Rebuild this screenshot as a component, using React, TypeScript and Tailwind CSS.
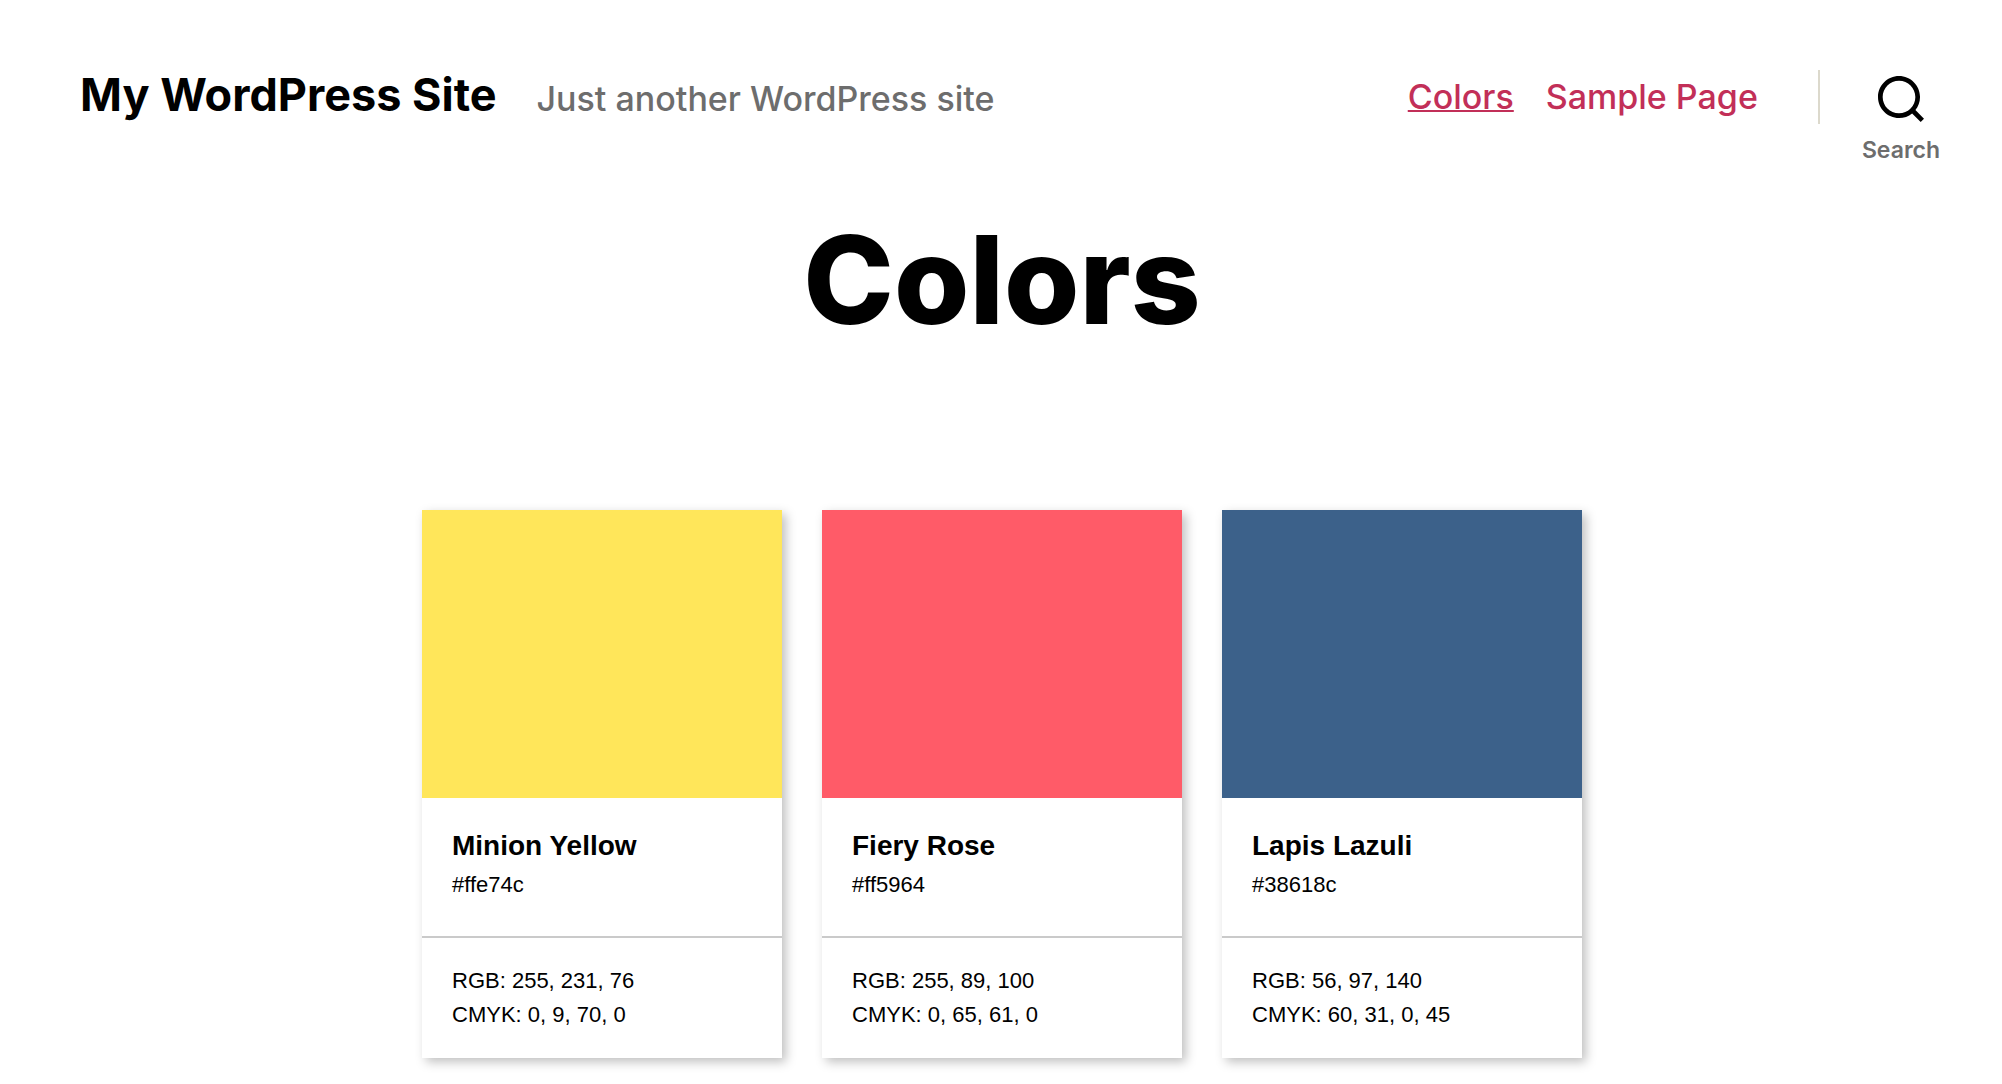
type Swatch = {
  name: string;
  hex: string;
  rgb: string;
  cmyk: string;
  fill: string;
};

const swatches: Swatch[] = [
  { name: "Minion Yellow", hex: "#ffe74c", rgb: "255, 231, 76", cmyk: "0, 9, 70, 0", fill: "bg-[#ffe65a]" },
  { name: "Fiery Rose", hex: "#ff5964", rgb: "255, 89, 100", cmyk: "0, 65, 61, 0", fill: "bg-[#ff5b68]" },
  { name: "Lapis Lazuli", hex: "#38618c", rgb: "56, 97, 140", cmyk: "60, 31, 0, 45", fill: "bg-[#3c618a]" },
];

function SearchIcon() {
  return (
    <svg viewBox="0 0 23 23" className="size-[46px]" fill="currentColor" aria-hidden="true">
      <path
        transform="translate(-20 -31)"
        d="M38.710696,48.0601792 L43,52.3494831 L41.3494831,54 L37.0601792,49.710696 C35.2632422,51.1481185 32.9839107,52.0076499 30.5038249,52.0076499 C24.7027226,52.0076499 20,47.3049272 20,41.5038249 C20,35.7027226 24.7027226,31 30.5038249,31 C36.3049272,31 41.0076499,35.7027226 41.0076499,41.5038249 C41.0076499,43.9839107 40.1481185,46.2632422 38.710696,48.0601792 Z M36.3875844,47.1716785 C37.8030221,45.7026647 38.6734666,43.7048964 38.6734666,41.5038249 C38.6734666,36.9918565 35.0157934,33.3341833 30.5038249,33.3341833 C25.9918565,33.3341833 22.3341833,36.9918565 22.3341833,41.5038249 C22.3341833,46.0157934 25.9918565,49.6734666 30.5038249,49.6734666 C32.7048964,49.6734666 34.7026647,48.8030221 36.1716785,47.3875844 C36.2023931,47.347638 36.2360451,47.3092237 36.2726343,47.2726343 C36.3092237,47.2360451 36.347638,47.2023931 36.3875844,47.1716785 Z"
      />
    </svg>
  );
}

function Header() {
  return (
    <header className="flex items-start justify-between pt-[70px] pr-[62px] pl-20">
      <div className="flex items-baseline gap-10 whitespace-nowrap">
        <a href="#" className="text-[45px] leading-[50px] font-bold">
          My WordPress Site
        </a>
        <p className="text-[34px] leading-10 font-medium text-[#6d6d6d]">Just another WordPress site</p>
      </div>
      <div className="flex items-start">
        <nav
          aria-label="Main"
          className="flex gap-8 text-[34px] leading-[54px] font-medium whitespace-nowrap text-[#c22f58]"
        >
          <a href="#" aria-current="page" className="underline decoration-2">
            Colors
          </a>
          <a href="#">Sample Page</a>
        </nav>
        <div className="ml-[60px] h-[54px] w-0.5 bg-[#dcd9cc]" />
        <button type="button" className="ml-[42px] flex flex-col items-center pt-1.5">
          <SearchIcon />
          <span className="mt-3 text-[23px] leading-8 font-semibold text-[#6d6d6d]">Search</span>
        </button>
      </div>
    </header>
  );
}

function ColorCard({ name, hex, rgb, cmyk, fill }: Swatch) {
  return (
    <article className="bg-white font-['Liberation_Sans',sans-serif] shadow-[4px_4px_10px_rgba(0,0,0,0.25)]">
      <div className={`h-72 ${fill}`} />
      <div className="border-b-2 border-[#cacaca] px-[30px] pt-8 pb-[34px]">
        <h2 className="text-[28px] leading-8 font-bold">{name}</h2>
        <p className="mt-1.5 text-[22px] leading-[34px]">{hex}</p>
      </div>
      <div className="px-[30px] py-[26px] text-[22px] leading-[34px]">
        <p>RGB: {rgb}</p>
        <p>CMYK: {cmyk}</p>
      </div>
    </article>
  );
}

export default function App() {
  return (
    <div className="min-h-screen bg-white font-['Inter',sans-serif] text-black">
      <Header />
      <main className="pl-0.5">
        <h1 className="mt-[50px] text-center text-[122px] leading-[128px] font-extrabold">Colors</h1>
        <section className="mx-auto mt-[166px] grid w-full max-w-[1160px] grid-cols-3 gap-10 pb-[26px]">
          {swatches.map((s) => (
            <ColorCard key={s.hex} {...s} />
          ))}
        </section>
      </main>
    </div>
  );
}
